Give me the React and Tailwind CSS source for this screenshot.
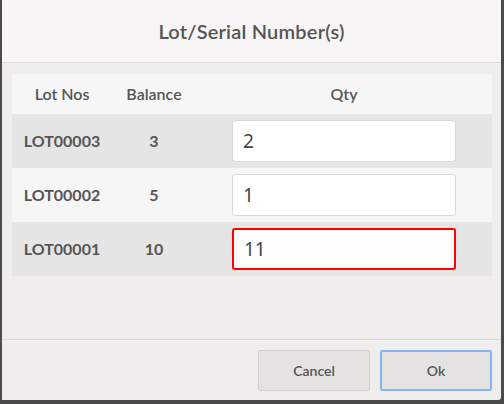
import React from "react";

const rows = [
  { lot: "LOT00003", bal: 3, qty: "2", bg: "bg-[#e5e5e5]" },
  { lot: "LOT00002", bal: 5, qty: "1", bg: "bg-[#f6f6f6]" },
  { lot: "LOT00001", bal: 10, qty: "11", bg: "bg-[#e5e5e5]", error: true },
];

export default function App() {
  return (
    <div className="w-[504px] h-[404px] bg-[#4b4b4b] overflow-hidden" style={{ fontFamily: "Lato, 'Open Sans', sans-serif" }}>
      <div className="ml-[2px] w-[499px] h-[400px] bg-[#efeeec] flex flex-col rounded-br-[3px]">
        {/* Header */}
        <div className="h-[63px] shrink-0 bg-[#f7f5f6] border-b border-[#dcdbdb] flex items-center justify-center">
          <h1 className="text-[20px] font-semibold text-[#555555] tracking-[0.2px]">Lot/Serial Number(s)</h1>
        </div>

        {/* Table */}
        <div className="px-[10px] pt-[11px] flex-1">
          <div className="w-[480px]">
            <div className="h-[40px] flex items-center bg-[#f7f7f7] text-[16px] font-semibold text-[#555555]">
              <div className="w-[100px] text-center">Lot Nos</div>
              <div className="w-[84px] text-center">Balance</div>
              <div className="flex-1 text-center">Qty</div>
            </div>
            {rows.map((r) => (
              <div key={r.lot} className={`h-[54px] flex items-center ${r.bg} text-[16px] font-bold text-[#555555]`}>
                <div className="w-[100px] text-center">{r.lot}</div>
                <div className="w-[84px] text-center">{r.bal}</div>
                <div className="flex-1 flex justify-center">
                  <div
                    className={`w-[224px] h-[42px] bg-white rounded-[3px] flex items-center px-[10px] text-[19px] font-normal text-[#444444] ${
                      r.error ? "border-2 border-[#ff0000]" : "border border-[#d8d8d8]"
                    }`}
                    style={{ fontFamily: "'Noto Sans', sans-serif" }}
                  >
                    {r.qty}
                  </div>
                </div>
              </div>
            ))}
          </div>
        </div>

        {/* Footer */}
        <div className="h-[61px] shrink-0 border-t border-[#d8d8d8] flex items-start justify-end gap-[10px] pt-[10px] pr-[9px]">
          <button className="w-[112px] h-[41px] bg-[#e4e3e1] border border-[#d0cfcd] rounded-[2px] text-[14px] font-semibold text-[#555555]">
            Cancel
          </button>
          <button className="w-[112px] h-[41px] bg-[#e4e3e1] border-2 border-[#86b6f2] rounded-[2px] text-[14px] font-semibold text-[#555555]">
            Ok
          </button>
        </div>
      </div>
    </div>
  );
}
